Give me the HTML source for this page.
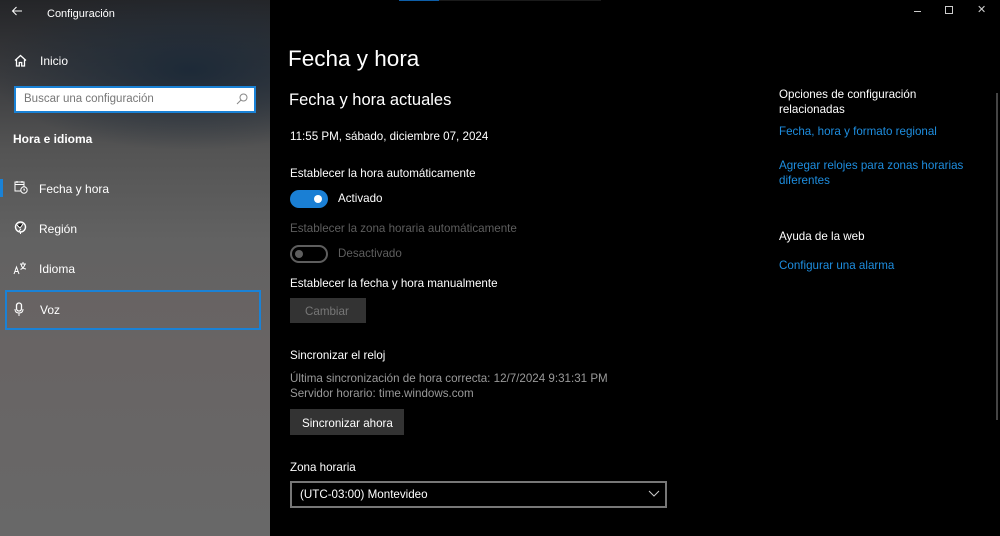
<!DOCTYPE html>
<html><head><meta charset="utf-8"><style>
*{margin:0;padding:0;box-sizing:border-box}
body{width:1000px;height:536px;overflow:hidden;background:#000;font-family:"Liberation Sans",sans-serif;color:#fff;position:relative}
.side{position:absolute;left:0;top:0;width:270px;height:536px;background:radial-gradient(ellipse 200px 80px at 190px 70px,#1d2a38 0%,rgba(30,40,50,0) 100%),linear-gradient(180deg,#242528 0%,#3a3b3e 14%,#545454 28%,#626262 45%,#686464 65%,#686868 100%)}
.t{position:absolute;white-space:nowrap}
.s{font-size:11.6px}
.nav{font-size:12px;color:#fff}
.gray{color:#9a9a9a}
.dis{color:#5e5e5e}
.blue{color:#1e8ee0}
</style></head><body>
<div class="side">
  <svg class="t" style="left:11px;top:6px" width="12" height="10" viewBox="0 0 12 10"><path d="M11 5H1.5M5.5 1L1.5 5L5.5 9" stroke="#fff" stroke-width="1" fill="none"/></svg>
  <div class="t" style="left:47px;top:8px;font-size:11px">Configuración</div>
  <svg class="t" style="left:14px;top:54px" width="13" height="13" viewBox="0 0 13 13"><path d="M1 6.5L6.5 1.5L12 6.5M2.5 5.3V12H5.3V8.5H7.7V12H10.5V5.3" stroke="#fff" stroke-width="1.3" fill="none"/></svg>
  <div class="t nav" style="left:40px;top:54px">Inicio</div>
  <div class="t" style="left:14px;top:86px;width:242px;height:27px;background:#fff;border:2px solid #1a82d6"></div>
  <div class="t" style="left:24px;top:93px;font-size:11.5px;color:#777">Buscar una configuración</div>
  <svg class="t" style="left:236px;top:93px" width="12" height="12" viewBox="0 0 12 12"><circle cx="7.5" cy="4.5" r="3.5" stroke="#888" fill="none"/><path d="M5 7L1 11" stroke="#888"/></svg>
  <div class="t" style="left:13px;top:132px;font-size:12px;font-weight:bold">Hora e idioma</div>
  <div class="t" style="left:0;top:179px;width:3px;height:18px;background:#1a82d6"></div>
  <svg class="t" style="left:14px;top:180px" width="14" height="14" viewBox="0 0 14 14"><rect x="1" y="2" width="9" height="9" stroke="#fff" fill="none"/><path d="M1 4.5H10M3 1V3M8 1V3" stroke="#fff"/><circle cx="10" cy="10" r="3.2" fill="#555" stroke="#fff"/><path d="M10 8.5V10H11" stroke="#fff" fill="none"/></svg>
  <div class="t nav" style="left:39px;top:182px">Fecha y hora</div>
  <svg class="t" style="left:14px;top:221px" width="13" height="14" viewBox="0 0 13 14"><circle cx="6.5" cy="6" r="5" stroke="#fff" fill="none" stroke-width="1.4"/><path d="M3 4L6 7L9 3M5 10L7 8" stroke="#fff"/><path d="M6.5 11V13" stroke="#fff"/></svg>
  <div class="t nav" style="left:39px;top:222px">Región</div>
  <svg class="t" style="left:13px;top:261px" width="14" height="14" viewBox="0 0 14 14"><path d="M1 13L3.5 6L6 13M2 10.5H5" stroke="#fff" fill="none"/><path d="M7 3H13M10 1V3M8 3Q9 8 13 8M12 3Q11 7 7.5 8.5" stroke="#fff" fill="none"/></svg>
  <div class="t nav" style="left:39px;top:262px">Idioma</div>
  <div class="t" style="left:5px;top:290px;width:256px;height:40px;border:2px solid #1a82d6;background:rgba(110,100,100,.25)"></div>
  <svg class="t" style="left:14px;top:302px" width="10" height="15" viewBox="0 0 10 15"><rect x="2.5" y="1" width="5" height="8" rx="2.5" stroke="#fff" fill="none" stroke-width="1.3"/><path d="M1 7Q1 11 5 11Q9 11 9 7M5 11V14" stroke="#fff" fill="none"/></svg>
  <div class="t nav" style="left:40px;top:303px">Voz</div>
</div>
<div class="t" style="left:399px;top:0;width:202px;height:1px;background:#1a1a1a"></div>
<div class="t" style="left:399px;top:0;width:40px;height:1px;background:#0d5ea8"></div>
<div class="t" style="left:914px;top:11px;width:7px;height:1px;background:#ccc"></div>
<div class="t" style="left:945px;top:6px;width:8px;height:8px;border:1px solid #ccc"></div>
<div class="t" style="left:977px;top:3px;font-size:11px;color:#ccc">✕</div>
<div class="t" style="left:288px;top:46px;font-size:22.5px">Fecha y hora</div>
<div class="t" style="left:289px;top:91px;font-size:16.5px">Fecha y hora actuales</div>
<div class="t s" style="left:290px;top:130px">11:55 PM, sábado, diciembre 07, 2024</div>
<div class="t s" style="left:290px;top:167px">Establecer la hora automáticamente</div>
<div class="t" style="left:290px;top:190px;width:38px;height:18px;border-radius:9px;background:#1a7fd4"></div>
<div class="t" style="left:314px;top:195px;width:8px;height:8px;border-radius:50%;background:#fff"></div>
<div class="t s" style="left:338px;top:192px">Activado</div>
<div class="t s dis" style="left:290px;top:222px">Establecer la zona horaria automáticamente</div>
<div class="t" style="left:290px;top:245px;width:38px;height:18px;border-radius:9px;border:2px solid #5e5e5e"></div>
<div class="t" style="left:295px;top:250px;width:8px;height:8px;border-radius:50%;background:#5e5e5e"></div>
<div class="t s dis" style="left:338px;top:247px">Desactivado</div>
<div class="t s" style="left:290px;top:277px">Establecer la fecha y hora manualmente</div>
<div class="t" style="left:290px;top:298px;width:76px;height:25px;background:#333"></div>
<div class="t s" style="left:305px;top:305px;color:#777">Cambiar</div>
<div class="t s" style="left:290px;top:349px">Sincronizar el reloj</div>
<div class="t s gray" style="left:290px;top:372px">Última sincronización de hora correcta: 12/7/2024 9:31:31 PM</div>
<div class="t s gray" style="left:290px;top:387px">Servidor horario: time.windows.com</div>
<div class="t" style="left:290px;top:409px;width:114px;height:26px;background:#333"></div>
<div class="t s" style="left:302px;top:417px">Sincronizar ahora</div>
<div class="t s" style="left:290px;top:461px">Zona horaria</div>
<div class="t" style="left:290px;top:481px;width:377px;height:27px;border:2px solid #777"></div>
<div class="t s" style="left:300px;top:488px">(UTC-03:00) Montevideo</div>
<svg class="t" style="left:648px;top:490px" width="12" height="8" viewBox="0 0 12 8"><path d="M1 1L6 6L11 1" stroke="#ccc" fill="none"/></svg>
<div class="t s" style="left:779px;top:87px;line-height:15px">Opciones de configuración<br>relacionadas</div>
<div class="t s blue" style="left:779px;top:125px">Fecha, hora y formato regional</div>
<div class="t s blue" style="left:779px;top:158px;line-height:15px">Agregar relojes para zonas horarias<br>diferentes</div>
<div class="t s" style="left:779px;top:230px">Ayuda de la web</div>
<div class="t s blue" style="left:779px;top:259px">Configurar una alarma</div>
<div class="t" style="left:996px;top:93px;width:2px;height:327px;background:#444"></div>
</body></html>
